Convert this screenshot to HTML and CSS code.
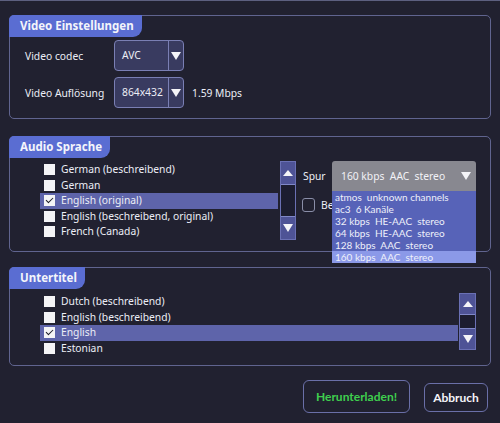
FILE: index.html
```html
<!DOCTYPE html>
<html lang="de">
<head>
<meta charset="utf-8">
<link rel="stylesheet" href="styles.css">
</head>
<body>
<div class="page">
  <section class="group group-video">
    <div class="tab">Video Einstellungen</div>
    <div class="video-grid">
      <span class="label">Video codec</span>
      <div class="select"><span class="sel-text">AVC</span><span class="sel-btn"><span class="tri-down"></span></span></div>
      <span></span>
      <span class="label">Video Auflösung</span>
      <div class="select"><span class="sel-text">864x432</span><span class="sel-btn"><span class="tri-down"></span></span></div>
      <span class="rate">1.59 Mbps</span>
    </div>
  </section>

  <section class="group group-audio">
    <div class="tab">Audio Sprache</div>
    <div class="audio-body">
      <ul class="list list-audio">
        <li><span class="cb"></span>German (beschreibend)</li>
        <li><span class="cb"></span>German</li>
        <li class="sel"><span class="cb checked"></span>English (original)</li>
        <li><span class="cb"></span>English (beschreibend, original)</li>
        <li><span class="cb"></span>French (Canada)</li>
      </ul>
      <div class="scroll scroll-audio">
        <span class="sb-btn"><span class="tri-up"></span></span>
        <span class="sb-track"></span>
        <span class="sb-btn"><span class="tri-down"></span></span>
      </div>
      <div class="audio-right">
        <div class="spur-row">
          <span class="label">Spur</span>
          <div class="combo">
            <div class="combo-head"><span>160 kbps&nbsp; AAC&nbsp; stereo</span><span class="tri-down"></span></div>
            <ul class="combo-list">
              <li>atmos&nbsp; unknown channels</li>
              <li>ac3&nbsp; 6 Kanäle</li>
              <li>32 kbps&nbsp; HE-AAC&nbsp; stereo</li>
              <li>64 kbps&nbsp; HE-AAC&nbsp; stereo</li>
              <li>128 kbps&nbsp; AAC&nbsp; stereo</li>
              <li class="hl">160 kbps&nbsp; AAC&nbsp; stereo</li>
            </ul>
          </div>
        </div>
        <div class="be-row"><span class="cb-round"></span><span class="be-label">Beschreibend</span></div>
      </div>
    </div>
  </section>

  <section class="group group-sub">
    <div class="tab">Untertitel</div>
    <div class="sub-body">
      <ul class="list list-sub">
        <li><span class="cb"></span>Dutch (beschreibend)</li>
        <li><span class="cb"></span>English (beschreibend)</li>
        <li class="sel"><span class="cb checked"></span>English</li>
        <li><span class="cb"></span>Estonian</li>
      </ul>
      <div class="scroll scroll-sub">
        <span class="sb-btn"><span class="tri-up"></span></span>
        <span class="sb-track"></span>
        <span class="sb-btn"><span class="tri-down"></span></span>
      </div>
    </div>
  </section>

  <div class="actions">
    <button class="btn btn-go">Herunterladen!</button>
    <button class="btn btn-cancel">Abbruch</button>
  </div>
</div>
</body>
</html>
```

FILE: styles.css
```css
* { box-sizing: border-box; }
html, body { margin: 0; padding: 0; }
body {
  width: 500px;
  height: 423px;
  overflow: hidden;
  background: #212130;
  border-top: 1px solid #5d6080;
  font-family: "Noto Sans", "DejaVu Sans", sans-serif;
  font-size: 10.3px;
  color: #eceef6;
}
.page {
  padding: 14px 9px 0 9px;
  display: flex;
  flex-direction: column;
}
.group {
  border: 1px solid #60648f;
  border-radius: 5px;
  position: relative;
}
.tab {
  display: inline-block;
  align-self: flex-start;
  background: #5a6dd2;
  color: #f4f5fb;
  font-family: "Noto Sans", sans-serif;
  font-weight: bold;
  font-size: 11.5px;
  height: 22px;
  line-height: 22px;
  padding: 0 8px 0 11px;
  margin: -1px 0 0 -1px;
  border-radius: 5px 0 9px 0;
}
.group-video { height: 104px; }
.group-audio { height: 116px; margin-top: 17px; }
.group-sub { height: 99px; margin-top: 15px; }

.video-grid {
  display: grid;
  grid-template-columns: 89px 70px auto;
  row-gap: 6px;
  align-items: center;
  padding: 3px 0 0 15px;
}
.select {
  width: 70px;
  height: 31px;
  border: 1px solid #7a7fb4;
  border-radius: 4px;
  background: #393b60;
  display: flex;
}
.sel-text { flex: 1; padding-left: 7px; line-height: 29px; white-space: nowrap; }
.sel-btn {
  width: 15px;
  flex: none;
  border-left: 1px solid #7a7fb4;
  display: flex;
  align-items: center;
  justify-content: center;
}
.rate { margin-left: 8px; }

.tri-down, .tri-up {
  width: 0; height: 0;
  border-left: 5px solid transparent;
  border-right: 5px solid transparent;
}
.tri-down { border-top: 8px solid #f4f4f8; }
.tri-up { border-bottom: 6px solid #f4f4f8; }

.list { list-style: none; margin: 0; padding: 0; }
.list li {
  height: 15.5px;
  line-height: 15.5px;
  display: flex;
  align-items: center;
  padding-left: 4px;
  white-space: nowrap;
}
.list li.sel { background: #5e64aa; }
.cb {
  width: 11px;
  height: 11px;
  background: #f4f4f6;
  margin-right: 6px;
  flex: none;
  position: relative;
}
.cb.checked::after {
  content: "";
  position: absolute;
  left: 2px;
  top: 1px;
  width: 6px;
  height: 3px;
  border-left: 1.5px solid #1c1c28;
  border-bottom: 1.5px solid #1c1c28;
  transform: rotate(-45deg) translate(-1px, 1px);
}

.audio-body {
  display: flex;
  align-items: flex-start;
  padding: 3px 0 0 30px;
}
.list-audio { width: 238px; margin-top: 1px; }
.scroll {
  display: flex;
  flex-direction: column;
  border: 1px solid #6a70b4;
  background: #1c1d30;
  margin-left: 2px;
}
.scroll-audio { width: 16px; height: 79px; }
.sb-btn {
  height: 22px;
  background: #4e5396;
  display: flex;
  align-items: center;
  justify-content: center;
  flex: none;
}
.sb-track {
  flex: 1;
  border-top: 1px solid #8088c8;
  border-bottom: 1px solid #8088c8;
}
.scroll-sub { width: 17px; height: 57px; margin-left: 1px; }
.scroll-sub .sb-btn { height: 20px; }

.audio-right { margin-left: 7px; display: flex; flex-direction: column; }
.spur-row { display: flex; align-items: center; }
.spur-row .label { width: 29px; }
.combo { position: relative; width: 144px; }
.combo-head {
  height: 30px;
  background: #888890;
  border-radius: 3px 3px 0 0;
  display: flex;
  align-items: center;
  justify-content: space-between;
  padding: 0 5px 0 9px;
  color: #f2f2f6;
  white-space: nowrap;
}
.combo-list {
  position: absolute;
  left: 0;
  top: 30px;
  width: 144px;
  margin: 0;
  padding: 0;
  list-style: none;
  background: #5763b8;
  z-index: 2;
}
.combo-list li {
  height: 12px;
  line-height: 12px;
  padding-left: 3px;
  font-family: Lato, "Noto Sans", sans-serif;
  font-size: 10px;
  white-space: nowrap;
  color: #eef0fa;
}
.combo-list li.hl { background: #8b99e8; }
.be-row { display: flex; align-items: center; margin-top: 7px; margin-left: -1px; }
.cb-round {
  width: 13px;
  height: 14px;
  border: 1px solid #8a8ea8;
  border-radius: 3px;
  margin-right: 6px;
  flex: none;
}
.be-label { white-space: nowrap; }

.sub-body {
  display: flex;
  align-items: flex-start;
  padding: 4px 0 0 30px;
}
.list-sub { width: 418px; margin-top: 1px; }

.actions {
  display: flex;
  justify-content: flex-end;
  align-items: center;
  gap: 14px;
  padding: 14px 3px 0 0;
}
.btn {
  font-family: Lato, "Noto Sans", sans-serif;
  font-weight: bold;
  font-size: 12px;
  background: transparent;
  border: 1px solid #6a6fa8;
  border-radius: 6px;
  padding: 0;
}
.btn-go { width: 107px; height: 33px; color: #3fcf4e; }
.btn-cancel { width: 64px; height: 29px; color: #f4f4f8; margin-top: 2px; }
```
